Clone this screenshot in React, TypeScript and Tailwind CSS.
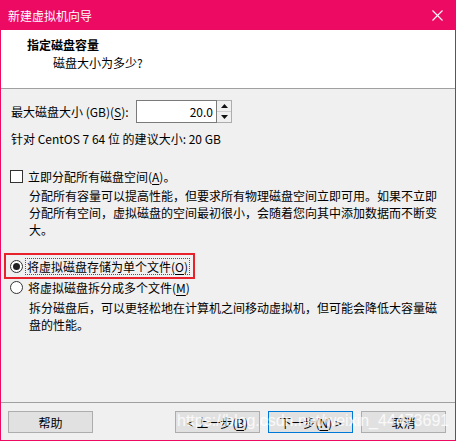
import React from "react";

const U = ({ children }: { children: React.ReactNode }) => (
  <span className="underline underline-offset-2">{children}</span>
);

const Btn = ({ children, primary }: { children: React.ReactNode; primary?: boolean }) => (
  <div
    className={
      "w-[85px] h-[22px] flex items-center justify-center bg-[#e1e1e1] border " +
      (primary ? "border-[#0078d7]" : "border-[#adadad]")
    }
  >
    {children}
  </div>
);

export default function App() {
  return (
    <div className="relative w-[456px] h-[441px] flex flex-col bg-[#f0f0f0] border-x border-b border-[#ec0a63] font-['Noto_Sans_CJK_SC','Noto_Sans',sans-serif] text-[12px] leading-[17px] text-black">
      {/* title bar */}
      <div className="h-[30px] shrink-0 bg-[#ec0a63] flex items-center justify-between pl-[7px] pr-[12px] text-white">
        <span>新建虚拟机向导</span>
        <svg width="11" height="11" viewBox="0 0 11 11">
          <path d="M0.5 0.5 L10.5 10.5 M10.5 0.5 L0.5 10.5" stroke="#fff" strokeWidth="1.1" />
        </svg>
      </div>

      {/* header */}
      <div className="h-[59px] shrink-0 bg-white border-b border-[#a0a0a0] pt-[6px]">
        <div className="pl-[26px] font-bold">指定磁盘容量</div>
        <div className="pl-[52px] mt-px">磁盘大小为多少?</div>
      </div>

      {/* body */}
      <div className="flex-1 flex flex-col">
        <div className="mt-[11px] pl-[10px] flex items-center h-[23px]">
          <span className="w-[125px]">
            最大磁盘大小 (GB)(<U>S</U>):
          </span>
          <div className="w-[81px] h-[23px] bg-white border border-[#7a7a7a] flex items-center justify-end pr-[3px]">
            20.0
          </div>
          <div className="w-[15px] h-[23px] flex flex-col border border-l-0 border-[#adadad] bg-[#f0f0f0]">
            <div className="flex-1 flex items-center justify-center border-b border-[#cfcfcf]">
              <svg width="7" height="4" viewBox="0 0 7 4"><path d="M3.5 0 L7 4 L0 4 Z" fill="#111" /></svg>
            </div>
            <div className="flex-1 flex items-center justify-center">
              <svg width="7" height="4" viewBox="0 0 7 4"><path d="M0 0 L7 0 L3.5 4 Z" fill="#111" /></svg>
            </div>
          </div>
        </div>

        <div className="mt-[7px] pl-[10px]">针对 CentOS 7 64 位 的建议大小: 20 GB</div>

        <div className="mt-[21px] pl-[9px] flex items-center gap-[5px]">
          <div className="w-[13px] h-[13px] bg-white border border-[#333]" />
          <span>
            立即分配所有磁盘空间(<U>A</U>)。
          </span>
        </div>
        <p className="mt-[2px] pl-[28px] w-[440px]">
          分配所有容量可以提高性能，但要求所有物理磁盘空间立即可用。如果不立即分配所有空间，虚拟磁盘的空间最初很小，会随着您向其中添加数据而不断变大。
        </p>

        <div className="mt-[15px] ml-[3px] w-[191px] h-[26px] border-2 border-[#e8222a] flex items-center pl-[4px] gap-[2px]">
          <div className="w-[13px] h-[13px] rounded-full bg-white border border-[#333] flex items-center justify-center">
            <div className="w-[7px] h-[7px] rounded-full bg-[#222]" />
          </div>
          <span className="border border-dotted border-[#555] px-px leading-[15px]">
            将虚拟磁盘存储为单个文件(<U>O</U>)
          </span>
        </div>
        <div className="pl-[9px] flex items-center gap-[5px]">
          <div className="w-[13px] h-[13px] rounded-full bg-white border border-[#333]" />
          <span>
            将虚拟磁盘拆分成多个文件(<U>M</U>)
          </span>
        </div>
        <p className="mt-[3px] pl-[28px] w-[440px]">
          拆分磁盘后，可以更轻松地在计算机之间移动虚拟机，但可能会降低大容量磁盘的性能。
        </p>
      </div>

      {/* footer */}
      <div className="shrink-0 border-t border-[#a0a0a0] pt-[8px] pb-[7px] pl-[7px] pr-[9px] flex items-center">
        <Btn>帮助</Btn>
        <div className="flex-1" />
        <div className="flex gap-[8px]">
          <Btn>
            &lt; 上一步(<U>B</U>)
          </Btn>
          <Btn primary>
            下一步(<U>N</U>) &gt;
          </Btn>
          <Btn>取消</Btn>
        </div>
      </div>

      {/* watermark */}
      <span className="absolute left-[176px] top-[411px] font-['Liberation_Sans',sans-serif] text-[16px] leading-[20px] text-white/80 whitespace-nowrap pointer-events-none">
        https://blog.csdn.net/weixin_44473691
      </span>
    </div>
  );
}
